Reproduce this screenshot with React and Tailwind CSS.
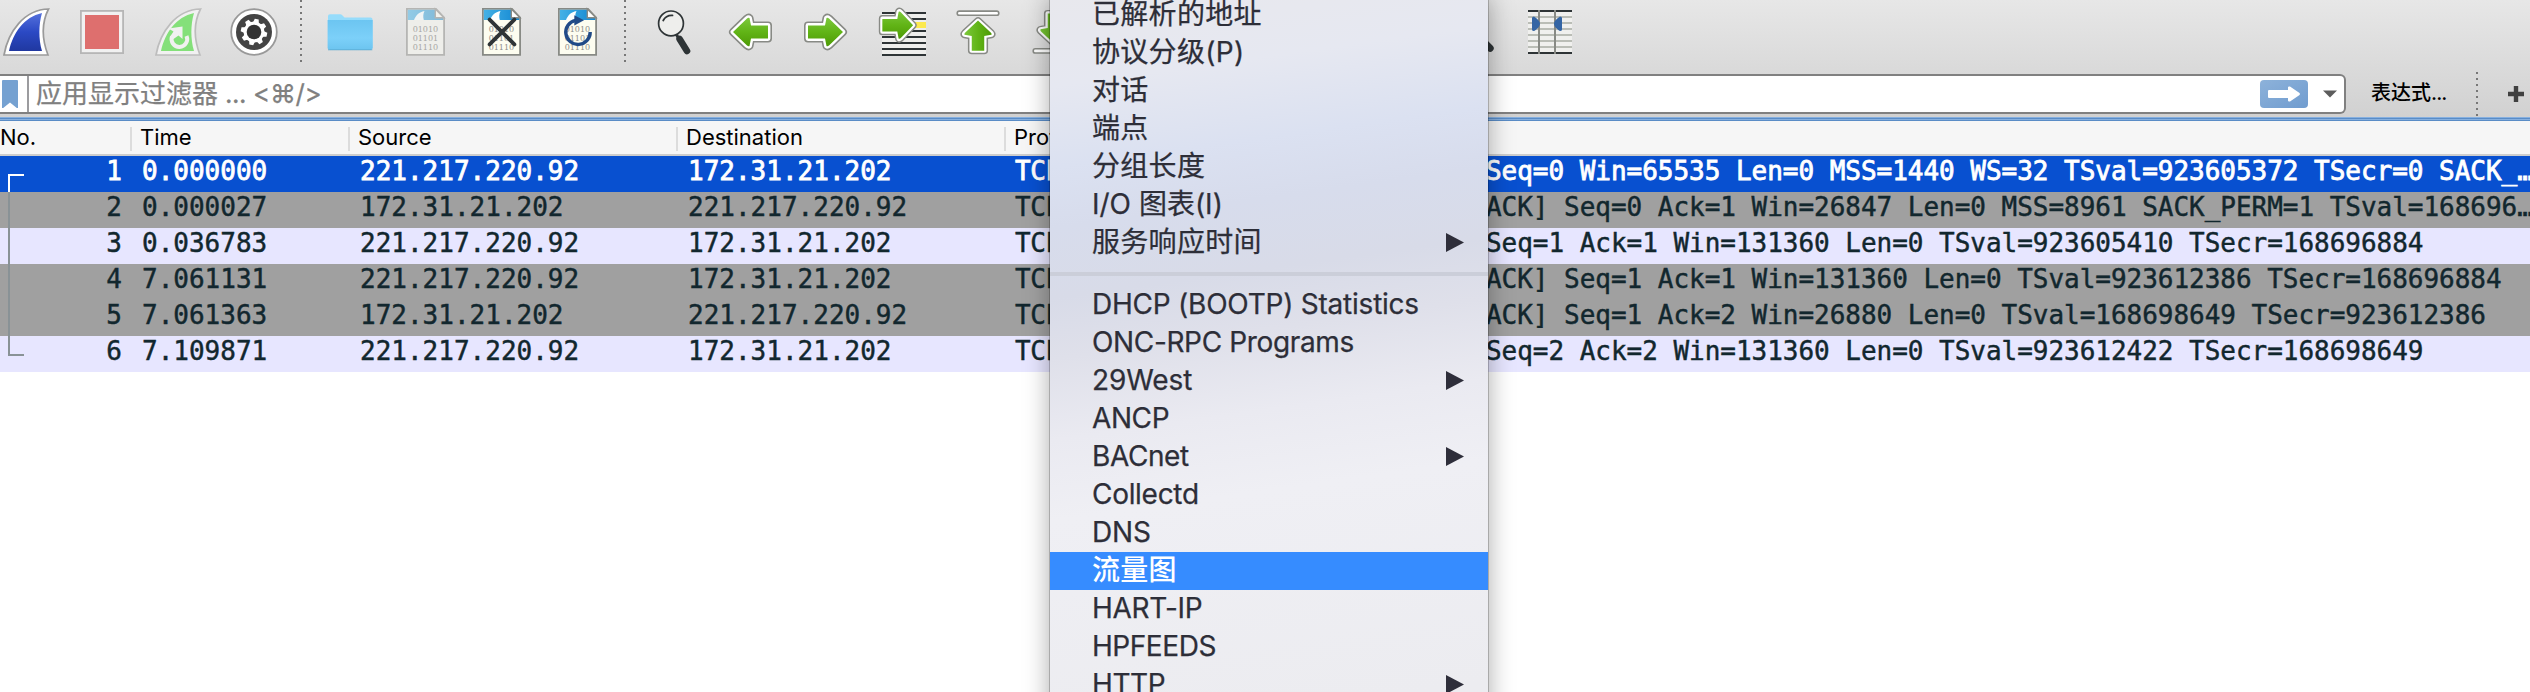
import React from "react";

const FIN = "M2 47 C6 24 22 1.5 46.5 1 C40 14 39.5 30 46 47 Z";
const FIN_INNER = "M7 43 C11 25 22 9 40 5 C36.5 17 36.5 31 40 43 Z";
const ARROW = "M7 24 L21 10.5 Q22.5 9.2 23.5 10 L25 17.5 H42 V30.5 H25 L23.5 38 Q22.5 38.8 21 37.5 Z";

function Svg({ children, className = "" }) {
  return (
    <svg viewBox="0 0 48 48" className={"h-12 w-12 shrink-0 overflow-visible " + className}>
      {children}
    </svg>
  );
}

function StartIcon() {
  return (
    <Svg>
      <defs>
        <linearGradient id="fin" x1="0" y1="0" x2="0" y2="1">
          <stop offset="0" stopColor="#5571dc" />
          <stop offset=".5" stopColor="#2b49c4" />
          <stop offset="1" stopColor="#2038a0" />
        </linearGradient>
      </defs>
      <path d={FIN} fill="#fff" stroke="#9a9a9a" strokeWidth="1.7" />
      <path d={FIN_INNER} fill="url(#fin)" />
    </Svg>
  );
}

function StopIcon() {
  return (
    <Svg>
      <rect x="2.9" y="2.9" width="42.2" height="42.2" fill="#f1f1f1" stroke="#b6b6b6" strokeWidth="1.8" />
      <rect x="7" y="7" width="34" height="34" fill="#de6f6e" />
    </Svg>
  );
}

function RestartIcon() {
  return (
    <Svg>
      <path d={FIN} fill="#f1f1f1" stroke="#bdbdbd" strokeWidth="1.7" />
      <path d={FIN_INNER} fill="#84e07a" />
      <path d="M18 28.5 A7.8 7.8 0 1 0 32.5 28" fill="none" stroke="#f1f1f1" strokeWidth="4" />
      <path d="M14.5 20.5 L28.5 18.5 L28.5 31 L24.5 27.5 L19.5 31 L16.5 28 L19.5 23.5 Z" fill="#f1f1f1" />
    </Svg>
  );
}

const TEETH = [0, 45, 90, 135, 180, 225, 270, 315];

function OptionsIcon() {
  return (
    <Svg>
      <circle cx="24" cy="24" r="22.8" fill="#fff" stroke="#999" strokeWidth="1.8" />
      <circle cx="24" cy="24" r="18" fill="#444" />
      <circle cx="24" cy="24" r="10.5" fill="#fff" />
      {TEETH.map((a) => (
        <path key={a} d="M21 15 L22 10.8 H26 L27 15 Z" fill="#fff" transform={`rotate(${a + 12} 24 24)`} />
      ))}
      <circle cx="24" cy="24" r="7.3" fill="#333" />
    </Svg>
  );
}

function FolderIcon() {
  return (
    <Svg>
      <defs>
        <linearGradient id="folder" x1="0" y1="0" x2="0" y2="1">
          <stop offset="0" stopColor="#6cc5f1" />
          <stop offset=".6" stopColor="#7cd0f9" />
          <stop offset="1" stopColor="#6cc4ef" />
        </linearGradient>
      </defs>
      <path d="M2 40 V8 Q2 6.3 4 6.3 H14 Q15.5 6.3 16.5 7.5 L18.5 9.6 H44.5 Q46.5 9.6 46.5 11.6 V40 Z" fill="#96dcfb" />
      <path d="M1.6 12 H46.7 V40 Q46.7 42 44.5 42 H4 Q1.6 42 1.6 40 Z" fill="url(#folder)" />
      <path d="M2 41.8 H46.3" stroke="#58a9d0" strokeWidth=".8" />
    </Svg>
  );
}

function FileSheet({ faded }) {
  return (
    <g>
      <defs>
        <linearGradient id="sheetTop" x1="0" y1="0" x2="1" y2="0">
          <stop offset="0" stopColor="#45b1e6" />
          <stop offset="1" stopColor="#1287d2" />
        </linearGradient>
        <linearGradient id="sheetTopFaded" x1="0" y1="0" x2="1" y2="0">
          <stop offset="0" stopColor="#93cbe6" />
          <stop offset="1" stopColor="#7fb8d8" />
        </linearGradient>
      </defs>
      <path
        d="M4.9 .9 H34 L42.1 9.5 V46.8 H4.9 Z"
        fill={faded ? "#eeeeea" : "#fdfdf0"}
        stroke={faded ? "#b5b5b3" : "#888a85"}
        strokeWidth="1.8"
      />
      <path d="M5.8 1.8 H33 L41.2 10 V12 H5.8 Z" fill={faded ? "url(#sheetTopFaded)" : "url(#sheetTop)"} />
      <path d="M12 12 C14 7 17 4 22.5 3 C21 6 21 9 21.8 12 Z" fill={faded ? "#f0f4f5" : "#fff"} />
      <path d="M33.3 1 V9.7 H42 Z" fill={faded ? "#f2f2ee" : "#fff"} stroke={faded ? "#b5b5b3" : "#888a85"} strokeWidth="1.4" />
      <g fill={faded ? "#a6a6a4" : "#8e8e8a"} fontFamily="DejaVu Serif, serif" fontSize="8" textRendering="geometricPrecision">
        <text x="10.7" y="24.2">01010</text>
        <text x="10.7" y="33.2">01101</text>
        <text x="10.7" y="42.2">01110</text>
      </g>
    </g>
  );
}

function SaveIcon() {
  return (
    <Svg>
      <FileSheet faded />
    </Svg>
  );
}

function CloseFileIcon() {
  return (
    <Svg>
      <FileSheet />
      <path d="M11.6 11.6 L36.4 36.4 M36.4 11.6 L11.6 36.4" stroke="#2e3436" strokeWidth="3.8" strokeLinecap="round" />
    </Svg>
  );
}

function ReloadIcon() {
  return (
    <Svg>
      <FileSheet />
      <path d="M36.2 24 A12.2 12.2 0 1 1 21.5 12.3" fill="none" stroke="#204a87" strokeWidth="3.4" />
      <path d="M20.3 7.3 L30 12.2 L20.3 17.5 Z" fill="#204a87" />
    </Svg>
  );
}

function FindIcon() {
  return (
    <Svg>
      <path d="M25.5 25 L29 31" stroke="#2e3436" strokeWidth="3" />
      <path d="M29.6 31 L37 43" stroke="#2e3436" strokeWidth="6.6" strokeLinecap="round" />
      <circle cx="21" cy="15.4" r="12.4" fill="#eeeeec" stroke="#2e3436" strokeWidth="1.7" />
      <path d="M13.2 12.5 Q16 7 22.5 7.4" fill="none" stroke="#2e3436" strokeWidth="1.8" strokeLinecap="round" />
    </Svg>
  );
}

function GreenArrow({ transform }) {
  return (
    <g transform={transform} strokeLinejoin="round">
      <defs>
        <linearGradient id="leaf" x1="0" y1="0" x2="0" y2="1">
          <stop offset="0" stopColor="#7cc83c" />
          <stop offset=".5" stopColor="#61b416" />
          <stop offset="1" stopColor="#4e9a06" />
        </linearGradient>
      </defs>
      <path d={ARROW} fill="#888a85" stroke="#888a85" strokeWidth="8" />
      <path d={ARROW} fill="#fff" stroke="#fff" strokeWidth="4.8" />
      <path d={ARROW} fill="url(#leaf)" />
    </g>
  );
}

function LeftIcon() {
  return (
    <Svg>
      <GreenArrow />
    </Svg>
  );
}

function RightIcon() {
  return (
    <Svg>
      <GreenArrow transform="matrix(-1 0 0 1 48 0)" />
    </Svg>
  );
}

const GOTO_LINES = [4, 10, 16, 22, 28, 34, 40, 46];

function GotoIcon() {
  return (
    <Svg>
      <rect x="4" y="4" width="44" height="44" fill="#eeeeec" />
      {GOTO_LINES.map((y) => (
        <rect key={y} x="4" y={y} width="44" height="2" fill="#2e3436" />
      ))}
      <rect x="30" y="14" width="18" height="6" fill="#fce94f" />
      <GreenArrow transform="matrix(-.88 0 0 .96 41.3 -5.9)" />
    </Svg>
  );
}

function FirstIcon() {
  return (
    <Svg>
      <rect x="3.2" y="3.1" width="41.6" height="4.2" rx="2.1" fill="#fff" stroke="#888a85" strokeWidth="1.6" />
      <GreenArrow transform="matrix(0 .86 .96 0 .96 6.6)" />
    </Svg>
  );
}

function LastIcon() {
  return (
    <Svg>
      <rect x="3.2" y="40.8" width="41.6" height="4.2" rx="2.1" fill="#fff" stroke="#888a85" strokeWidth="1.6" />
      <GreenArrow transform="matrix(0 -.86 .96 0 .96 41.5)" />
    </Svg>
  );
}

function ZoomResetIcon() {
  return (
    <Svg>
      <path d="M29 29 L40.2 40.2" stroke="#2e3436" strokeWidth="7" strokeLinecap="round" />
      <circle cx="20" cy="19" r="13" fill="#eeeeec" stroke="#2e3436" strokeWidth="1.7" />
    </Svg>
  );
}

const COLUMN_LINES = [8, 14, 20, 26, 32, 38];

function ColumnsIcon() {
  return (
    <Svg>
      <rect x="2" y="2" width="44" height="44" fill="#f0f0ee" />
      {COLUMN_LINES.map((y) => (
        <rect key={y} x="2" y={y} width="44" height="2" fill="#babdb6" />
      ))}
      <rect x="2" y="2" width="44" height="2" fill="#2e3436" />
      <rect x="2" y="44" width="44" height="2" fill="#2e3436" />
      <rect x="12" y="2" width="2" height="44" fill="#888a85" />
      <rect x="28" y="2" width="2" height="44" fill="#888a85" />
      <path d="M6 10 Q6 8.5 8 8.5 C10.5 10 14 13 14 15.7 C14 18.5 10.5 21.5 8 23 Q6 23 6 21.5 Z" fill="#3465a4" />
      <path d="M36 10 Q36 8.5 34 8.5 C31.5 10 28 13 28 15.7 C28 18.5 31.5 21.5 34 23 Q36 23 36 21.5 Z" fill="#3465a4" />
    </Svg>
  );
}

function Dots({ className }) {
  return (
    <div
      className={
        "w-0.5 shrink-0 bg-[repeating-linear-gradient(to_bottom,#777_0px,#777_2px,transparent_2px,transparent_6px)] " +
        className
      }
    />
  );
}

function Toolbar() {
  return (
    <div className="flex h-[74px] items-start pl-0.5">
      <div className="flex gap-7 pt-2">
        <StartIcon />
        <StopIcon />
        <RestartIcon />
        <OptionsIcon />
      </div>
      <Dots className="ml-[22px] h-[62px]" />
      <div className="ml-6 flex gap-7 pt-2">
        <FolderIcon />
        <SaveIcon />
        <CloseFileIcon />
        <ReloadIcon />
      </div>
      <Dots className="ml-[22px] h-[62px]" />
      <div className="ml-6 flex gap-7 pt-2">
        <FindIcon />
        <LeftIcon />
        <RightIcon />
        <GotoIcon />
        <FirstIcon />
        <LastIcon />
      </div>
      <div className="ml-[372px] flex gap-7 pt-2">
        <ZoomResetIcon />
        <ColumnsIcon />
      </div>
    </div>
  );
}

function FilterBar() {
  return (
    <div className="flex h-[43px] items-start">
      <div className="flex h-10 w-[2346px] items-center rounded-r-md border-y-2 border-r-2 border-[#808080] bg-white">
        <svg viewBox="0 0 16 28" className="ml-0.5 h-7 w-4">
          <path d="M0 1 Q0 0 1 0 H15 Q16 0 16 1 V28 H14.8 L8 22.5 L1.2 28 H0 Z" fill="#75a1d1" />
        </svg>
        <div className="ml-[9px] h-9 w-0.5 bg-[#9c9c9f]" />
        <div className="ml-[7px] flex-1 font-['Inter','Noto_Sans_CJK_SC',sans-serif] text-[26px] leading-9 whitespace-pre text-[#808080] [-webkit-text-stroke:0.25px_#808080]">
          应用显示过滤器<span className="tracking-[-0.4px]"> ... &lt;⌘/&gt;</span>
        </div>
        <div className="flex h-7 w-12 items-center justify-center rounded bg-gradient-to-br from-[#8db2da] to-[#709ccf]">
          <svg viewBox="0 0 32 16" className="h-4 w-8">
            <path d="M1 4 H20 V1.5 Q20 0 22 .6 L31.5 7 Q32.3 8 31.5 9 L22 15.4 Q20 16 20 14.5 V12 H1 Q0 12 0 11 V5 Q0 4 1 4 Z" fill="#fff" />
          </svg>
        </div>
        <svg viewBox="0 0 14 8" className="mr-[7px] ml-[15px] h-2 w-3.5">
          <path d="M0 .5 H14 L7 7.5 Z" fill="#5c5c5c" />
        </svg>
      </div>
      <div className="ml-[25px] h-10 w-[78px] font-['Inter','Noto_Sans_CJK_SC',sans-serif] text-[20px] leading-[39px] font-medium whitespace-pre text-black">
        表达式<span className="tracking-[-0.9px]">...</span>
      </div>
      <Dots className="ml-[27px] -mt-0.5 h-11" />
      <svg viewBox="0 0 16 16" className="mt-3 ml-[30px] h-4 w-4">
        <path d="M8 0 V16 M0 8 H16" stroke="#404040" strokeWidth="4.4" />
      </svg>
    </div>
  );
}

function HeaderCell({ className, children, last }) {
  return (
    <div className={"flex h-[33px] shrink-0 items-center justify-between " + className}>
      <span>{children}</span>
      {!last && <span className="mt-0.5 h-6 w-0.5 bg-[#dcdcdc]" />}
    </div>
  );
}

const PACKETS = [
  { no: 1, time: "0.000000", src: "221.217.220.92", dst: "172.31.21.202", info: "Seq=0 Win=65535 Len=0 MSS=1440 WS=32 TSval=923605372 TSecr=0 SACK_…", tone: "bg-[#0850d0] text-white [-webkit-text-stroke:0.8px_#fff]" },
  { no: 2, time: "0.000027", src: "172.31.21.202", dst: "221.217.220.92", info: "ACK] Seq=0 Ack=1 Win=26847 Len=0 MSS=8961 SACK_PERM=1 TSval=168696…", tone: "bg-[#a0a0a0] text-[#12272e] [-webkit-text-stroke:0.45px_#12272e]" },
  { no: 3, time: "0.036783", src: "221.217.220.92", dst: "172.31.21.202", info: "Seq=1 Ack=1 Win=131360 Len=0 TSval=923605410 TSecr=168696884", tone: "bg-[#e7e6ff] text-[#12272e] [-webkit-text-stroke:0.45px_#12272e]" },
  { no: 4, time: "7.061131", src: "221.217.220.92", dst: "172.31.21.202", info: "ACK] Seq=1 Ack=1 Win=131360 Len=0 TSval=923612386 TSecr=168696884", tone: "bg-[#a0a0a0] text-[#12272e] [-webkit-text-stroke:0.45px_#12272e]" },
  { no: 5, time: "7.061363", src: "172.31.21.202", dst: "221.217.220.92", info: "ACK] Seq=1 Ack=2 Win=26880 Len=0 TSval=168698649 TSecr=923612386", tone: "bg-[#a0a0a0] text-[#12272e] [-webkit-text-stroke:0.45px_#12272e]" },
  { no: 6, time: "7.109871", src: "221.217.220.92", dst: "172.31.21.202", info: "Seq=2 Ack=2 Win=131360 Len=0 TSval=923612422 TSecr=168698649", tone: "bg-[#e7e6ff] text-[#12272e] [-webkit-text-stroke:0.45px_#12272e]" },
];

function Bracket({ no }) {
  if (no === 1) return <div className="mt-[18px] ml-2 h-[18px] w-4 border-t-2 border-l-2 border-white" />;
  if (no === 6) return <div className="ml-2 h-5 w-4 border-b-2 border-l-2 border-[#899296]" />;
  return <div className="ml-2 h-9 w-4 border-l-2 border-[#899296]" />;
}

function PacketList() {
  return (
    <div className="bg-white">
      <div className="flex h-[35px] border-b-2 border-[#cdcdcd] bg-[#f6f6f6] font-['Inter',sans-serif] text-[22px] text-black">
        <HeaderCell className="w-[132px]">No.</HeaderCell>
        <HeaderCell className="w-[218px] pl-2">Time</HeaderCell>
        <HeaderCell className="w-[328px] pl-2">Source</HeaderCell>
        <HeaderCell className="w-[328px] pl-2">Destination</HeaderCell>
        <HeaderCell className="w-[480px] pl-2" last>Protocol</HeaderCell>
      </div>
      {PACKETS.map((p) => (
        <div
          key={p.no}
          className={"flex h-9 overflow-hidden font-['DejaVu_Sans_Mono',monospace] text-[26px] leading-[31px] whitespace-pre " + p.tone}
        >
          <div className="flex w-[122px] shrink-0 justify-between">
            <Bracket no={p.no} />
            <span>{p.no}</span>
          </div>
          <div className="w-[218px] shrink-0 pl-5">{p.time}</div>
          <div className="w-[328px] shrink-0 pl-5">{p.src}</div>
          <div className="w-[328px] shrink-0 pl-5">{p.dst}</div>
          <div className="w-[490px] shrink-0 pl-[19px] tracking-[-0.3px]">TCP</div>
          <div className="shrink-0 tracking-[-0.03px]">{p.info}</div>
        </div>
      ))}
    </div>
  );
}

const MENU_TOP = [
  { label: "已解析的地址", track: "tracking-[0.3px]" },
  { label: "协议分级(P)", track: "tracking-[0.3px]" },
  { label: "对话", track: "tracking-[0.3px]" },
  { label: "端点", track: "tracking-[0.3px]" },
  { label: "分组长度", track: "tracking-[0.3px]" },
  { label: "I/O 图表(I)", track: "tracking-[0px]" },
  { label: "服务响应时间", track: "tracking-[0.3px]", sub: true },
];

const MENU_BOTTOM = [
  { label: "DHCP (BOOTP) Statistics", track: "tracking-[-0.23px]" },
  { label: "ONC-RPC Programs", track: "tracking-[-0.35px]" },
  { label: "29West", track: "tracking-[-0.1px]", sub: true },
  { label: "ANCP", track: "tracking-[-0.4px]" },
  { label: "BACnet", track: "tracking-[-0.4px]", sub: true },
  { label: "Collectd", track: "tracking-[-0.3px]" },
  { label: "DNS", track: "tracking-[-0.2px]" },
  { label: "流量图", track: "tracking-[0.3px]", active: true },
  { label: "HART-IP", track: "tracking-[-0.3px]" },
  { label: "HPFEEDS", track: "tracking-[-0.45px]" },
  { label: "HTTP", track: "tracking-[-0.4px]", sub: true },
];

function MenuItem({ label, track, sub, active }) {
  return (
    <div
      className={
        "flex h-[38px] shrink-0 items-start justify-between pr-6 pl-[42px] leading-[37px] whitespace-pre " +
        (active ? "bg-[#368cff] font-medium text-white" : "text-[#2d2e38] [-webkit-text-stroke:0.25px_#2d2e38]")
      }
    >
      <span className={track}>{label}</span>
      {sub && (
        <svg viewBox="0 0 18 19" className="mt-[9px] h-[19px] w-[18px]">
          <path d="M0 0 L18 9.5 L0 19 Z" fill="#2e2e3a" />
        </svg>
      )}
    </div>
  );
}

function StatisticsMenu() {
  return (
    <div className="absolute -top-1 left-[1050px] flex h-[740px] w-[438px] flex-col bg-[linear-gradient(176deg,#ececf0_0px,#efeff4_240px,#ebebf2_330px,#dfe0ea_420px,#d8dbe8_490px,#d7dcec_560px,#dbe1f1_615px,#e6e8f1_690px,#e8e8ed_750px)] font-['Inter','Noto_Sans_CJK_SC',sans-serif] text-[28px] shadow-[0_0_0_1px_rgba(0,0,0,0.2),0_0_24px_rgba(0,0,0,0.35)] [background-image:linear-gradient(176deg,#e8e8ed_0px,#e8e8ed_20px),linear-gradient(176deg,#e8e8ed,#e8e8ed)]">
      <div className="-mt-0 flex h-[740px] flex-col bg-[linear-gradient(172deg,#e8e8ed_0px,#e6e8f1_90px,#dbe1f1_170px,#d7dcec_230px,#d8dbe8_300px,#dfe0ea_360px,#eaeaf1_440px,#efeff4_520px,#ececf0_740px)]">
        {MENU_TOP.map((m) => (
          <MenuItem key={m.label} {...m} />
        ))}
        <div className="flex h-6 shrink-0 items-center">
          <div className="h-1 w-full bg-[#cbced9]" />
        </div>
        {MENU_BOTTOM.map((m) => (
          <MenuItem key={m.label} {...m} />
        ))}
      </div>
    </div>
  );
}

export default function App() {
  return (
    <div className="relative h-[692px] w-full overflow-hidden bg-white">
      <div className="bg-gradient-to-b from-[#e7e7e7] to-[#d1d1d1]">
        <Toolbar />
        <FilterBar />
      </div>
      <div className="h-1 bg-[linear-gradient(to_bottom,#86b0e0_0px,#86b0e0_1px,#5a8cc6_1px,#5a8cc6_2px,#86b0e0_2px,#86b0e0_3px,#5a8cc6_3px)]" />
      <PacketList />
      <StatisticsMenu />
    </div>
  );
}
